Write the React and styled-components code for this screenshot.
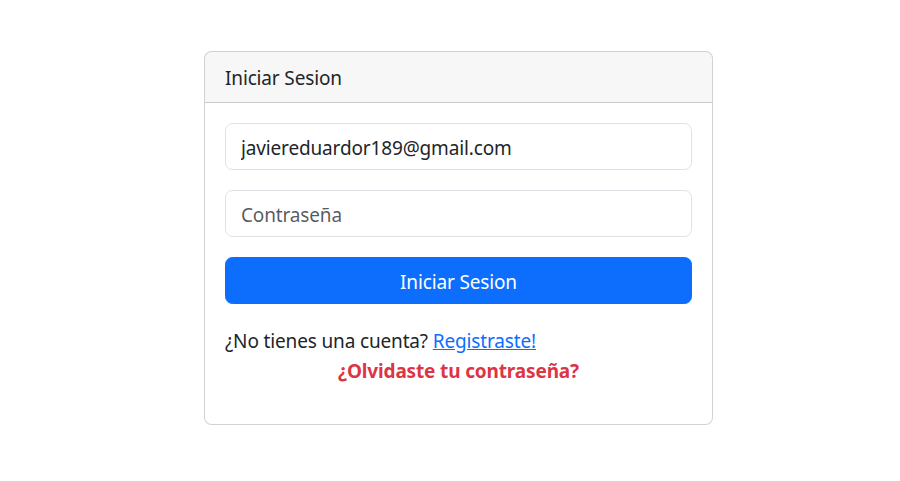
import styled, { createGlobalStyle } from 'styled-components';

const GlobalStyle = createGlobalStyle`
  html, body {
    margin: 0;
    padding: 0;
    background: #fff;
  }
  body {
    font-family: "Noto Sans", "Open Sans", sans-serif;
    font-size: 19px;
    letter-spacing: -0.15px;
    line-height: 30px;
    color: #212529;
  }
  * { box-sizing: border-box; }
`;

const Page = styled.div`
  display: flex;
  align-items: flex-start;
  padding: 51px 0 0 204px;
  min-height: 481px;
`;

const Card = styled.div`
  width: 509px;
  border: 1px solid rgba(0, 0, 0, 0.175);
  border-radius: 7.5px;
  background: #fff;
  overflow: hidden;
`;

const CardHeader = styled.div`
  padding: 11px 20px 9px;
  background: rgba(0, 0, 0, 0.03);
  border-bottom: 1px solid rgba(0, 0, 0, 0.175);
`;

const CardBody = styled.form`
  padding: 20px;
  display: flex;
  flex-direction: column;
`;

const Input = styled.input`
  display: block;
  width: 100%;
  height: 47px;
  margin-bottom: 20px;
  padding: 9px 15px 6px;
  font: inherit;
  letter-spacing: inherit;
  color: #212529;
  border: 1px solid #dee2e6;
  border-radius: 7.5px;
  outline: none;

  &::placeholder {
    color: rgba(33, 37, 41, 0.75);
  }
`;

const Button = styled.button`
  height: 47px;
  margin-bottom: 20px;
  padding: 9px 15px 6px;
  font: inherit;
  letter-spacing: inherit;
  color: #fff;
  background: #0d6efd;
  border: 1px solid #0d6efd;
  border-radius: 7.5px;
  cursor: pointer;
`;

const Text = styled.p`
  margin: ${(p) => (p.$last ? '0 0 18px' : '2px 0 0')};
  text-align: ${(p) => (p.$center ? 'center' : 'left')};
`;

const Link = styled.a`
  color: #0d6efd;
  text-decoration: underline;
`;

const DangerLink = styled.a`
  color: #dc3545;
  font-weight: 700;
  text-decoration: none;
`;

export default function App() {
  return (
    <>
      <GlobalStyle />
      <Page>
        <Card>
          <CardHeader>Iniciar Sesion</CardHeader>
          <CardBody onSubmit={(e) => e.preventDefault()}>
            <Input type="email" defaultValue="javiereduardor189@gmail.com" />
            <Input type="password" placeholder="Contraseña" />
            <Button type="submit">Iniciar Sesion</Button>
            <Text>
              ¿No tienes una cuenta? <Link href="#">Registraste!</Link>
            </Text>
            <Text $center $last>
              <DangerLink href="#">¿Olvidaste tu contraseña?</DangerLink>
            </Text>
          </CardBody>
        </Card>
      </Page>
    </>
  );
}
